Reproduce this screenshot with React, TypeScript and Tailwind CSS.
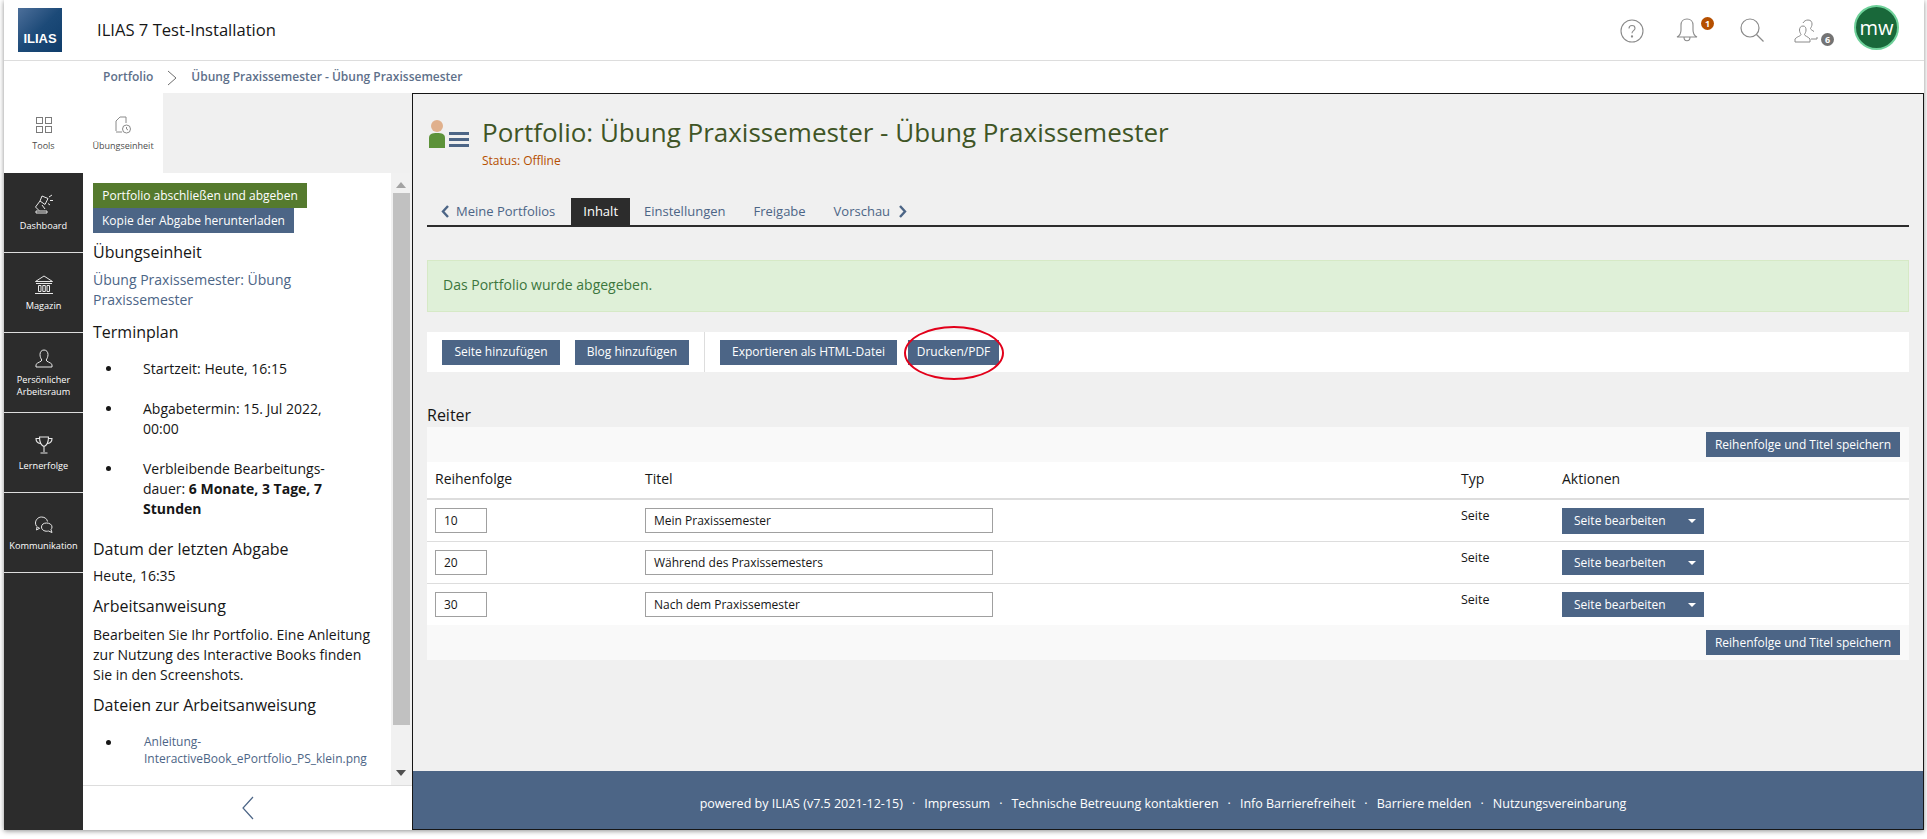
import type { ReactNode } from 'react'

const nav = [
  { label: 'Dashboard', icon: <LampIcon /> },
  { label: 'Magazin', icon: <BankIcon /> },
  { label: 'Persönlicher Arbeitsraum', icon: <PersonIcon /> },
  { label: 'Lernerfolge', icon: <TrophyIcon /> },
  { label: 'Kommunikation', icon: <ChatIcon /> },
]

const rows = [
  { order: '10', title: 'Mein Praxissemester', h: 'h-[42px]', btn: 'h-[26px]' },
  { order: '20', title: 'Während des Praxissemesters', h: 'h-[42px]', btn: 'h-[25px]' },
  { order: '30', title: 'Nach dem Praxissemester', h: 'h-[41px]', btn: 'h-[25px]' },
]

function LampIcon() {
  return (
    <svg width="20" height="22" viewBox="0 0 20 22" fill="none" stroke="#e8e8e8" strokeWidth="1">
      <path d="M8 2l6 2.500-3 6-5-3.500zM6 7l-4.500 6 3.500 3.500M2 17h11v2H2zM15 3l3-2M16 6.500l3 0M14 9.500l2 1.500" />
      <path d="M8 11l3 4" />
    </svg>
  )
}

function BankIcon() {
  return (
    <svg width="20" height="22" viewBox="0 0 20 22" fill="none" stroke="#e8e8e8" strokeWidth="1">
      <path d="M1.500 7.500L10 2l8.500 5.500zM2 9.500h16M4.500 11.500h2.500v6H4.500zM8.800 11.500h2.500v6H8.800zM13 11.500h2.500v6H13zM1 19.500h18" />
    </svg>
  )
}

function PersonIcon() {
  return (
    <svg width="20" height="22" viewBox="0 0 20 22" fill="none" stroke="#e8e8e8" strokeWidth="1">
      <path d="M10 2C7.500 2 6 4 6 6.500s1 4 1.800 5.500c0 1.800-4.300 2.200-5.800 4.500V19h16v-2.500c-1.500-2.300-5.800-2.700-5.800-4.500.8-1.500 1.800-3 1.800-5.500S12.500 2 10 2z" />
    </svg>
  )
}

function TrophyIcon() {
  return (
    <svg width="20" height="22" viewBox="0 0 20 22" fill="none" stroke="#e8e8e8" strokeWidth="1.100">
      <path d="M5.500 3h9c0 5-.8 8-4.500 9.500C6.300 11 5.500 8 5.500 3zM5.500 4.500H2c0 3 1.500 4.500 4.300 5M14.500 4.500H18c0 3-1.500 4.500-4.300 5M10 12.500V18M6.500 19h7" />
    </svg>
  )
}

function ChatIcon() {
  return (
    <svg width="20" height="22" viewBox="0 0 20 22" fill="none" stroke="#e8e8e8" strokeWidth="1">
      <path d="M5 14c-2-.8-3.500-2.500-3.500-5C1.500 6 4 3 7.500 3s5.500 2 6 4.500M3 13l-.5 3 3.500-2" />
      <path d="M12.500 9c3 0 5.500 1.500 5.500 4 0 1-.4 1.800-1 2.500l1 3-3.500-1.500c-3 .8-7-.5-7-4 0-2.500 2-4 5-4z" />
    </svg>
  )
}

function Btn({ children, className = '' }: { children: ReactNode; className?: string }) {
  return (
    <button className={`flex h-[25px] items-center justify-center bg-[#4c6586] text-[12px] text-white ${className}`}>
      {children}
    </button>
  )
}

function SideHeading({ children, className = '' }: { children: ReactNode; className?: string }) {
  return <h3 className={`text-[16px] leading-[20px] font-normal text-[#161616] ${className}`}>{children}</h3>
}

function Bullet({ children, className = '' }: { children: ReactNode; className?: string }) {
  return (
    <li className={`relative pl-[50px] ${className}`}>
      <span className="absolute top-[7px] left-[13px] h-[5px] w-[5px] rounded-full bg-[#161616]" />
      {children}
    </li>
  )
}

function Header() {
  return (
    <header className="flex h-[61px] items-center border-b border-[#dddddd] bg-white pr-[25px] pl-[14px]">
      <div className="flex h-[44px] w-[44px] items-end justify-center bg-gradient-to-br from-[#4c6f9a] via-[#1c4a78] to-[#0f3d6b] pb-[4px] font-['Liberation_Sans',sans-serif] text-[13px] font-bold text-white">
        ILIAS
      </div>
      <span className="ml-[35px] text-[16.600px] text-[#161616]">ILIAS 7 Test-Installation</span>
      <div className="ml-auto flex items-center">
        <svg width="24" height="24" viewBox="0 0 24 24" fill="none" stroke="#8a8a8a" strokeWidth="1.100" className="mt-[2px]">
          <circle cx="12" cy="12" r="11" />
          <path d="M9 9.500c0-2 1.300-3 3-3s3 1 3 2.800c0 2.400-3 2.400-3 5" />
          <circle cx="12" cy="17.500" r=".6" fill="#8a8a8a" />
        </svg>
        <div className="relative ml-[31px]">
          <svg width="24" height="26" viewBox="0 0 24 26" fill="none" stroke="#8a8a8a" strokeWidth="1.100" className="block">
            <path d="M12 2c-4 0-6 3-6 6v5c0 3-2 6-4 7h20c-2-1-4-4-4-7V8c0-3-2-6-6-6zM9 20c0 5 6 5 6 0" />
          </svg>
          <span className="absolute top-0 -right-[15px] flex h-[13px] w-[13px] items-center justify-center rounded-full bg-[#b54f00] text-[9px] font-bold text-white">1</span>
        </div>
        <svg width="24" height="24" viewBox="0 0 24 24" fill="none" stroke="#8a8a8a" strokeWidth="1.200" className="ml-[41px]">
          <circle cx="10" cy="10" r="9" />
          <path d="M16.500 16.500l7 7" />
        </svg>
        <div className="relative ml-[30px] mt-[2px]">
          <svg width="24" height="24" viewBox="0 0 24 24" fill="none" stroke="#8a8a8a" strokeWidth="1" className="block">
            <path d="M9 7c-2.500 0-3.500 2-3.500 4s.8 3 1.500 4.500c0 1.500-4 2-6 4.500v3h15v-3c-2-2.500-5.500-3-5.500-4.500.7-1.500 1.500-2.500 1.500-4.500S11.500 7 9 7z" />
            <path d="M9 4c1-2 3-3 5-3 3 0 4 2 4 4s-.8 3-1.500 4.500c0 1 2 2 3.500 3M17 20h6v-2" />
          </svg>
          <span className="absolute -right-[16px] -bottom-[3px] flex h-[13px] w-[13px] items-center justify-center rounded-full bg-[#737373] text-[9px] font-bold text-white">6</span>
        </div>
        <div className="ml-[36px] mb-[5px] flex h-[45px] w-[45px] items-center justify-center rounded-full border-2 border-[#6fd19a] bg-[#19683a] text-[20px] text-white">
          mw
        </div>
      </div>
    </header>
  )
}

function Sidebar() {
  return (
    <div className="flex h-full w-[408px] shrink-0">
      <nav className="flex w-[79px] shrink-0 flex-col bg-[#2c2c2c]">
        <div className="flex h-[80px] flex-col items-center bg-white pt-[23px]">
          <svg width="18" height="18" viewBox="0 0 18 18" fill="none" stroke="#7a7a7a" strokeWidth="1">
            <rect x="1.500" y="1.500" width="6" height="6" />
            <rect x="10.500" y="1.500" width="6" height="6" />
            <rect x="1.500" y="10.500" width="6" height="6" />
            <rect x="10.500" y="10.500" width="6" height="6" />
          </svg>
          <span className="mt-[5px] text-[9px] text-[#4c4c4c]">Tools</span>
        </div>
        {nav.map(item => (
          <div key={item.label} className="flex h-[80px] flex-col items-center justify-center border-b border-[#dddddd] text-center text-[9.200px] leading-[12px] font-medium text-white">
            {item.icon}
            <span className="mt-[4px] block px-[2px]">{item.label}</span>
          </div>
        ))}
      </nav>
      <div className="flex min-w-0 flex-1 flex-col bg-[#f0f0f0]">
        <div className="flex h-[80px] w-[80px] shrink-0 flex-col items-center bg-white pt-[23px]">
          <svg width="18" height="18" viewBox="0 0 18 18" fill="none" stroke="#8a8a8a" strokeWidth="1">
            <path d="M2 15V5l4-4h6v6M8 16H2" />
            <circle cx="12.500" cy="13" r="4" />
            <path d="M12.500 11v2l1.500 1" />
          </svg>
          <span className="mt-[5px] text-[9px] text-[#4c4c4c]">Übungseinheit</span>
        </div>
        <div className="flex min-h-0 flex-1">
          <div className="w-[308px] shrink-0 overflow-hidden bg-white pt-[10px] pl-[10px] text-[14px] leading-[20px] text-[#161616]">
            <Btn className="w-[214px] bg-[#557a2e]!">Portfolio abschließen und abgeben</Btn>
            <Btn className="w-[201px]">Kopie der Abgabe herunterladen</Btn>
            <SideHeading className="mt-[9px]">Übungseinheit</SideHeading>
            <p className="mt-[8px] w-[230px] text-[#4c6586]">Übung Praxissemester: Übung Praxissemester</p>
            <SideHeading className="mt-[12px]">Terminplan</SideHeading>
            <ul className="mt-[17px] w-[240px]">
              <Bullet>Startzeit: Heute, 16:15</Bullet>
              <Bullet className="mt-[20px]">Abgabetermin: 15. Jul 2022, 00:00</Bullet>
              <Bullet className="mt-[20px]">Verbleibende Bearbeitungs-<br />dauer: <b>6 Monate, 3 Tage, 7 Stunden</b></Bullet>
            </ul>
            <SideHeading className="mt-[20px]">Datum der letzten Abgabe</SideHeading>
            <p className="mt-[7px]">Heute, 16:35</p>
            <SideHeading className="mt-[10px]">Arbeitsanweisung</SideHeading>
            <p className="mt-[9px] w-[285px]">Bearbeiten Sie Ihr Portfolio. Eine Anleitung zur Nutzung des Interactive Books finden Sie in den Screenshots.</p>
            <SideHeading className="mt-[10px]">Dateien zur Arbeitsanweisung</SideHeading>
            <ul className="mt-[18px] text-[12px] leading-[17px] text-[#4c6586]">
              <Bullet className="pl-[51px]!">Anleitung-<br />InteractiveBook_ePortfolio_PS_klein.png</Bullet>
            </ul>
          </div>
          <div className="flex w-[20px] flex-col items-center bg-[#f1f1f1]">
            <svg width="10" height="6" viewBox="0 0 10 6" className="mt-[9px]"><path d="M5 0l5 6H0z" fill="#a3a3a3" /></svg>
            <div className="mt-[5px] h-[532px] w-[17px] bg-[#c1c1c1]" />
            <svg width="10" height="6" viewBox="0 0 10 6" className="mt-auto mb-[9px]"><path d="M0 0h10L5 6z" fill="#505050" /></svg>
          </div>
        </div>
        <div className="flex h-[45px] shrink-0 items-center justify-center border-t border-[#dddddd] bg-white">
          <svg width="14" height="24" viewBox="0 0 14 24" fill="none" stroke="#4c6586" strokeWidth="1.200">
            <path d="M12 1L2 12l10 11" />
          </svg>
        </div>
      </div>
    </div>
  )
}

function Tab({ children, active = false, className = '' }: { children: ReactNode; active?: boolean; className?: string }) {
  return (
    <span className={`flex h-[27px] items-center ${active ? 'bg-[#2c2c2c] px-[12px] text-white' : 'px-[14px] text-[#4c6586]'} ${className}`}>
      {children}
    </span>
  )
}

function TabChevron({ flip = false }: { flip?: boolean }) {
  return (
    <svg width="9" height="13" viewBox="0 0 9 13" fill="none" stroke="#4c6586" strokeWidth="2.400" className={flip ? 'ml-[8px]' : 'mr-[6px]'}>
      <path d={flip ? 'M2 1l5 5.500-5 5.500' : 'M7 1L2 6.500 7 12'} />
    </svg>
  )
}

function Main() {
  return (
    <main className="flex h-full min-w-0 flex-1 flex-col border border-[#161616] bg-[#f0f0f0]">
      <div className="flex-1 px-[14px] pt-[26px]">
        <div className="flex items-start pl-[1px]">
          <svg width="42" height="30" viewBox="0 0 42 30" className="shrink-0">
            <circle cx="9" cy="6" r="6" fill="#e0b08c" />
            <path d="M1 28V18c0-4 3-5 8-5s8 1 8 5v10z" fill="#5c9239" />
            <path d="M21 12h20v3H21zM21 18h20v3H21zM21 24h20v3H21z" fill="#4c6586" />
          </svg>
          <div className="ml-[12px]">
            <h1 className="-mt-[3px] text-[26px] leading-[30px] font-normal text-[#3f5526]">Portfolio: Übung Praxissemester - Übung Praxissemester</h1>
            <p className="mt-[6px] text-[12px] leading-[16px] text-[#b54f00]">Status: Offline</p>
          </div>
        </div>
        <div className="mt-[29px] flex items-end border-b-2 border-[#2c2c2c] pb-0 text-[13px] leading-[27px] text-[#4c6586]">
          <Tab className="mr-[2px]"><TabChevron />Meine Portfolios</Tab>
          <Tab active>Inhalt</Tab>
          <Tab>Einstellungen</Tab>
          <Tab>Freigabe</Tab>
          <Tab>Vorschau<TabChevron flip /></Tab>
        </div>
        <div className="mt-[33px] flex h-[52px] items-center border border-[#d6e9c6] bg-[#dff0d8] pb-[4px] pl-[15px] text-[14px] text-[#3c763d]">
          Das Portfolio wurde abgegeben.
        </div>
        <div className="relative mt-[20px] flex h-[40px] items-center bg-white pl-[15px]">
          <Btn className="w-[118px]">Seite hinzufügen</Btn>
          <Btn className="ml-[15px] w-[114px]">Blog hinzufügen</Btn>
          <div className="ml-[15px] h-full w-px bg-[#dddddd]" />
          <Btn className="ml-[15px] w-[177px]">Exportieren als HTML-Datei</Btn>
          <Btn className="ml-[11px] w-[91px]">Drucken/PDF</Btn>
          <div className="absolute top-[-6px] left-[477px] h-[54px] w-[100px] rounded-[50%] border-2 border-[#e2001a]" />
        </div>
        <h2 className="mt-[33px] text-[16px] leading-[20px] font-normal text-[#161616]">Reiter</h2>
        <div className="mt-[2px] text-[13px] text-[#161616]">
          <div className="flex h-[35px] items-center justify-end bg-[#f9f9f9] pr-[9px]">
            <Btn className="w-[194px]">Reihenfolge und Titel speichern</Btn>
          </div>
          <div className="flex h-[38px] items-center border-b-2 border-[#dddddd] bg-white pb-[4px] text-[14px]">
            <span className="w-[218px] pl-[8px]">Reihenfolge</span>
            <span className="w-[816px]">Titel</span>
            <span className="w-[101px]">Typ</span>
            <span>Aktionen</span>
          </div>
          {rows.map((row, i) => (
            <div key={row.order} className={`flex items-start bg-white pt-[8px] ${row.h} ${i < 2 ? 'border-b border-[#dddddd]' : ''}`}>
              <div className="w-[218px] pl-[8px]">
                <div className="flex h-[25px] w-[52px] items-center border border-[#a0a0a0] pl-[8px] text-[12px]">{row.order}</div>
              </div>
              <div className="w-[816px]">
                <div className="flex h-[25px] w-[348px] items-center border border-[#a0a0a0] pl-[8px] text-[12px]">{row.title}</div>
              </div>
              <span className="w-[101px] text-[12.500px] leading-[16px]">Seite</span>
              <button className={`flex w-[142px] items-center bg-[#4c6586] pl-[12px] text-[12px] text-white ${row.btn}`}>
                Seite bearbeiten
                <svg width="8" height="4" viewBox="0 0 8 4" className="ml-[22px]"><path d="M0 0h8L4 4z" fill="#fff" /></svg>
              </button>
            </div>
          ))}
          <div className="flex h-[35px] items-center justify-end bg-[#f9f9f9] pr-[9px]">
            <Btn className="w-[194px]">Reihenfolge und Titel speichern</Btn>
          </div>
        </div>
      </div>
      <footer className="flex h-[58px] shrink-0 items-center justify-center gap-[9px] bg-[#4c6586] pt-[9px] pr-[10px] text-[12.500px] whitespace-pre text-white">
        <span>powered by ILIAS (v7.5 2021-12-15)</span><span>·</span>
        <span>Impressum</span><span>·</span>
        <span>Technische Betreuung kontaktieren</span><span>·</span>
        <span>Info Barrierefreiheit</span><span>·</span>
        <span>Barriere melden</span><span>·</span>
        <span>Nutzungsvereinbarung</span>
      </footer>
    </main>
  )
}

export default function App() {
  return (
    <div className="h-[839px] overflow-hidden bg-white pr-[3px] pl-[4px] font-['Open_Sans',sans-serif]">
      <div className="flex h-[830px] flex-col bg-white shadow-[0_1px_5px_rgba(0,0,0,0.45)]">
        <Header />
        <div className="h-[32px] shrink-0 pl-[99px] text-[12px] font-semibold leading-[31px] text-[#5e708a]">
          Portfolio
          <svg width="12" height="16" viewBox="0 0 12 16" fill="none" stroke="#6e6e6e" className="mx-[13px] inline-block"><path d="M2 1l8 7-8 7" /></svg>
          Übung Praxissemester - Übung Praxissemester
        </div>
        <div className="flex min-h-0 flex-1 items-stretch">
          <Sidebar />
          <Main />
        </div>
      </div>
    </div>
  )
}
